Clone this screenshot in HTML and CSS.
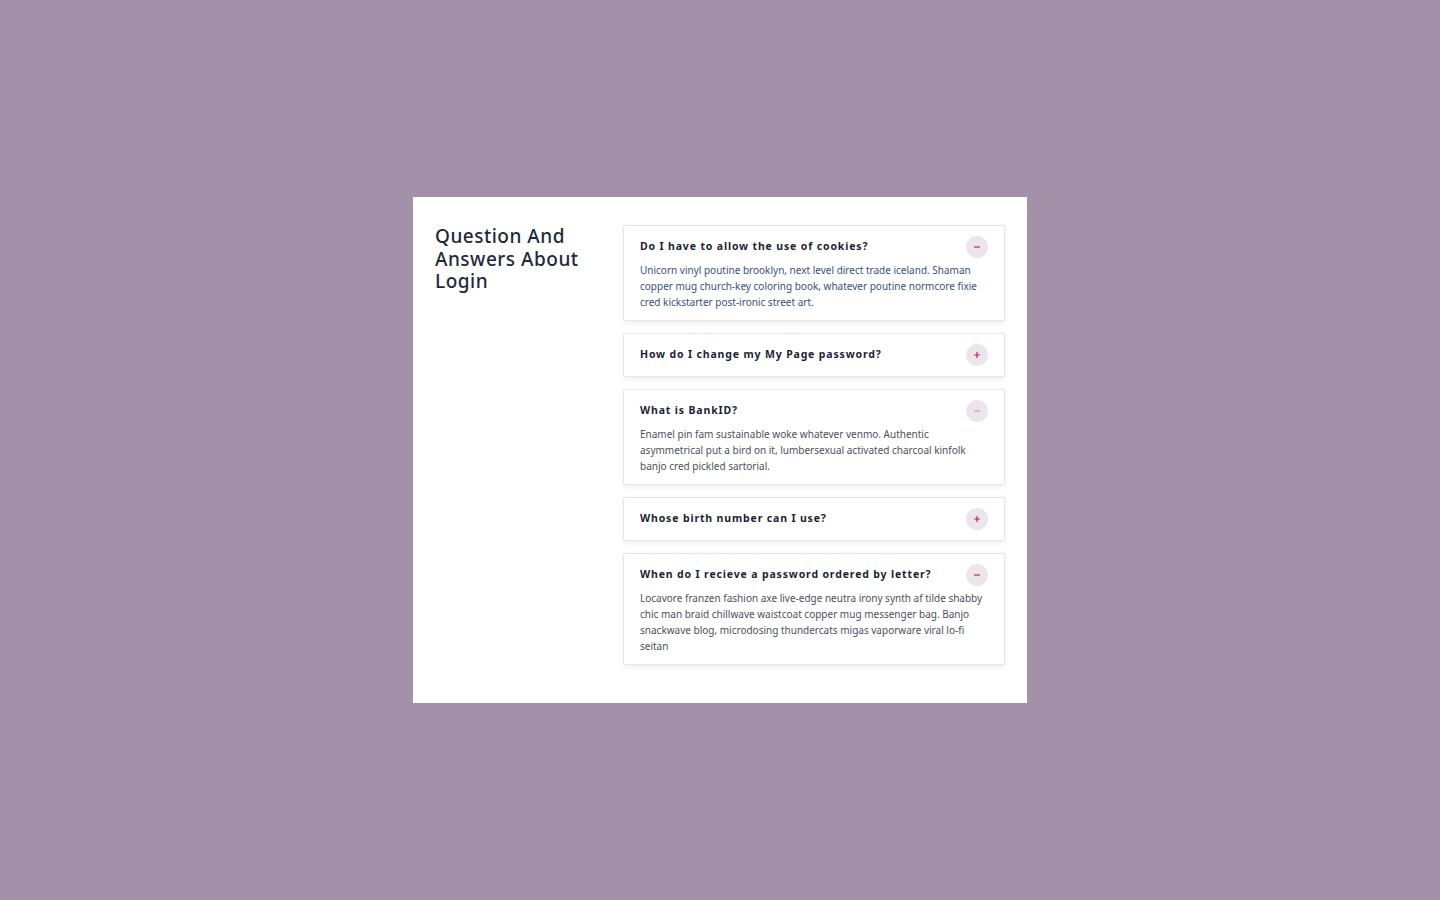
FILE: index.html
```html
<!DOCTYPE html>
<html lang="en">
<head>
<meta charset="utf-8">
<title>FAQ</title>
<link rel="stylesheet" href="styles.css">
</head>
<body>
<main class="card">
  <h1 class="title">Question And Answers About Login</h1>
  <div class="list">
    <section class="item open">
      <div class="head">
        <h2 class="q">Do I have to allow the use of cookies?</h2>
        <span class="toggle"><svg viewBox="0 0 10 10" width="10" height="10"><path d="M2 5h6" stroke="currentColor" stroke-width="1.2"/></svg></span>
      </div>
      <p class="a blue">Unicorn vinyl poutine brooklyn, next level direct trade iceland. Shaman copper mug church-key coloring book, whatever poutine normcore fixie cred kickstarter post-ironic street art.</p>
    </section>
    <section class="item">
      <div class="head">
        <h2 class="q">How do I change my My Page password?</h2>
        <span class="toggle"><svg viewBox="0 0 10 10" width="10" height="10"><path d="M2 5h6M5 2v6" stroke="currentColor" stroke-width="1.2"/></svg></span>
      </div>
    </section>
    <section class="item open">
      <div class="head">
        <h2 class="q">What is BankID?</h2>
        <span class="toggle faded"><svg viewBox="0 0 10 10" width="10" height="10"><path d="M2 5h6" stroke="currentColor" stroke-width="1.2"/></svg></span>
      </div>
      <p class="a">Enamel pin fam sustainable woke whatever venmo. Authentic asymmetrical put a bird on it, lumbersexual activated charcoal kinfolk banjo cred pickled sartorial.</p>
    </section>
    <section class="item">
      <div class="head">
        <h2 class="q">Whose birth number can I use?</h2>
        <span class="toggle"><svg viewBox="0 0 10 10" width="10" height="10"><path d="M2 5h6M5 2v6" stroke="currentColor" stroke-width="1.2"/></svg></span>
      </div>
    </section>
    <section class="item open">
      <div class="head">
        <h2 class="q">When do I recieve a password ordered by letter?</h2>
        <span class="toggle"><svg viewBox="0 0 10 10" width="10" height="10"><path d="M2 5h6" stroke="currentColor" stroke-width="1.2"/></svg></span>
      </div>
      <p class="a">Locavore franzen fashion axe live-edge neutra irony synth af tilde shabby chic man braid chillwave waistcoat copper mug messenger bag. Banjo snackwave blog, microdosing thundercats migas vaporware viral lo-fi seitan</p>
    </section>
  </div>
</main>
</body>
</html>
```

FILE: styles.css
```css
* { box-sizing: border-box; }
html, body { margin: 0; height: 100%; }
body {
  background: #a291a8;
  font-family: "Noto Sans", "Open Sans", sans-serif;
  display: flex;
  align-items: center;
  justify-content: center;
}
.card {
  width: 614px;
  background: #fff;
  display: flex;
  justify-content: space-between;
  padding: 28px 22px 38px 22px;
}
.title {
  margin: 0;
  width: 160px;
  font-size: 19px;
  line-height: 22.5px;
  font-weight: 500;
  letter-spacing: 0.5px;
  color: #1e2a3a;
}
.list {
  width: 382px;
  display: flex;
  flex-direction: column;
  gap: 12px;
}
.item {
  border: 1px solid #e6e6ea;
  border-radius: 2px;
  box-shadow: 0 2px 6px rgba(0,0,0,0.07);
  background: #fff;
  padding: 10px 16px 10px 16px;
}
.head {
  display: flex;
  align-items: center;
  justify-content: space-between;
  height: 22px;
}
.q {
  margin: 0;
  font-size: 10.5px;
  font-weight: 700;
  letter-spacing: 0.85px;
  color: #1a1f33;
  position: relative;
  top: -1px;
}
.toggle {
  width: 22px;
  height: 22px;
  border-radius: 50%;
  background: #ece5ed;
  color: #c2255c;
  display: flex;
  align-items: center;
  justify-content: center;
  flex: none;
}
.toggle.faded { color: #dc93ad; }
.a {
  margin: 4px 0 0 0;
  font-size: 10px;
  line-height: 16px;
  color: #4c5060;
  padding-right: 4px;
}
.a.blue { color: #3a5080; }
```
